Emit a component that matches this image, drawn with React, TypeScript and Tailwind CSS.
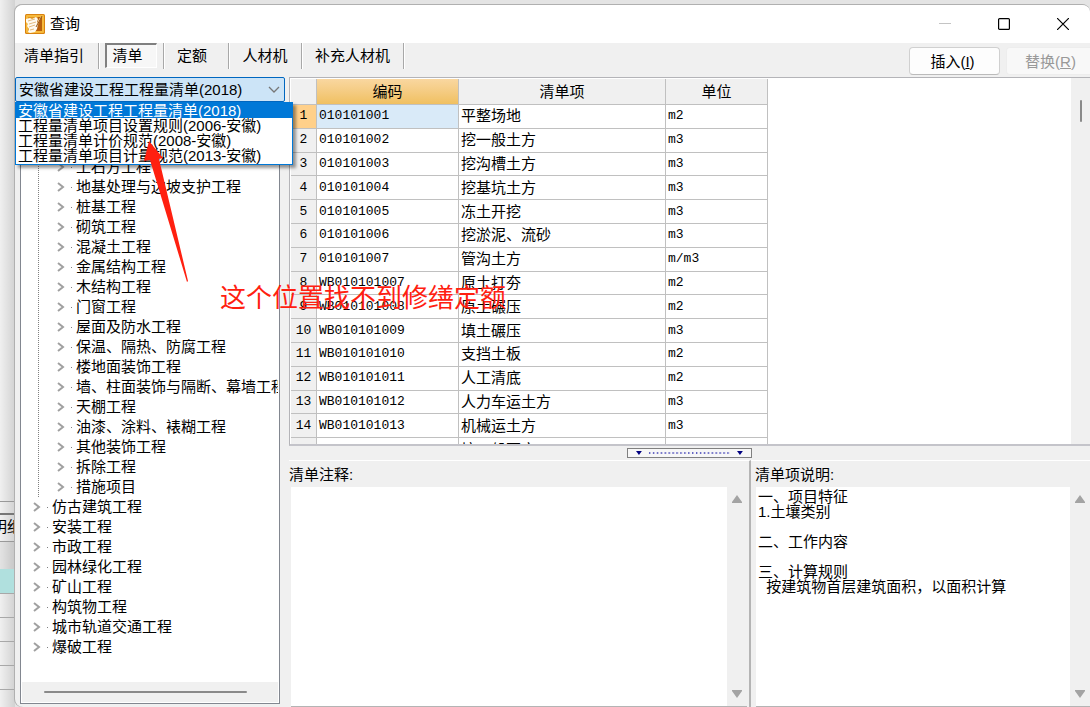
import React, { useState } from "react";

const libraries = [
  "安徽省建设工程工程量清单(2018)",
  "工程量清单项目设置规则(2006-安徽)",
  "工程量清单计价规范(2008-安徽)",
  "工程量清单项目计量规范(2013-安徽)",
];

const subChapters = [
  "土石方工程",
  "地基处理与边坡支护工程",
  "桩基工程",
  "砌筑工程",
  "混凝土工程",
  "金属结构工程",
  "木结构工程",
  "门窗工程",
  "屋面及防水工程",
  "保温、隔热、防腐工程",
  "楼地面装饰工程",
  "墙、柱面装饰与隔断、幕墙工程",
  "天棚工程",
  "油漆、涂料、裱糊工程",
  "其他装饰工程",
  "拆除工程",
  "措施项目",
];

const chapters = [
  "仿古建筑工程",
  "安装工程",
  "市政工程",
  "园林绿化工程",
  "矿山工程",
  "构筑物工程",
  "城市轨道交通工程",
  "爆破工程",
];

const items = [
  { code: "010101001", name: "平整场地", unit: "m2" },
  { code: "010101002", name: "挖一般土方", unit: "m3" },
  { code: "010101003", name: "挖沟槽土方", unit: "m3" },
  { code: "010101004", name: "挖基坑土方", unit: "m3" },
  { code: "010101005", name: "冻土开挖", unit: "m3" },
  { code: "010101006", name: "挖淤泥、流砂", unit: "m3" },
  { code: "010101007", name: "管沟土方", unit: "m/m3" },
  { code: "WB010101007", name: "原土打夯", unit: "m2" },
  { code: "WB010101008", name: "原土碾压", unit: "m2" },
  { code: "WB010101009", name: "填土碾压", unit: "m3" },
  { code: "WB010101010", name: "支挡土板", unit: "m2" },
  { code: "WB010101011", name: "人工清底", unit: "m2" },
  { code: "WB010101012", name: "人力车运土方", unit: "m3" },
  { code: "WB010101013", name: "机械运土方", unit: "m3" },
];

const description = `一、项目特征
1.土壤类别

二、工作内容

三、计算规则
  按建筑物首层建筑面积，以面积计算`;

const AppIcon = () => (
  <svg viewBox="0 0 20 20" className="h-5 w-5">
    <rect width="20" height="20" rx="1.5" fill="#d9820f" />
    <rect x="1" y="1" width="18" height="18" rx="1" fill="#f6b93c" />
    <path d="M3 3h14v14H3z" fill="#e0951f" />
    <path d="M13 3h4v14H8z" fill="#b9600d" />
    <path d="M1 5l4-1 2 1 4-2 2 2-1 3 1 2-1 5-2 3-5 1-2-1 1-3-2-3 1-2-2-2z" fill="#fffaf0" />
    <path d="M3 7l7-2M4 10l7-2M4 13l6-2M5 16l4-1" stroke="#dfb272" strokeWidth="0.9" />
    <path d="M17 2c-3 2-5 6-6 11l2-2c1-4 3-6 4-9z" fill="#fbe0a0" />
    <path d="M17 2l-6 11" stroke="#7a3606" strokeWidth="0.8" />
  </svg>
);

const Chevron = () => (
  <svg viewBox="0 0 8 10" className="h-[10px] w-2" fill="none" stroke="#a0a0a0" strokeWidth="2">
    <path d="M1 1l5 4-5 4" />
  </svg>
);

const TreeItem = ({ label }: { label: string }) => (
  <li className="flex h-5 items-center whitespace-nowrap">
    <button type="button" aria-label={`展开 ${label}`} className="w-[14px] shrink-0">
      <Chevron />
    </button>
    <span className="mr-1 h-px w-px shrink-0 bg-[#808080]" />
    <span>{label}</span>
  </li>
);

const ScrollColumn = () => (
  <div className="flex w-5 shrink-0 flex-col items-center justify-between bg-[#f0f0f0] py-2">
    <svg viewBox="0 0 10 8" className="h-2 w-[10px]" fill="#a3a3a3">
      <path d="M5 0l5 7v1H0V7z" />
    </svg>
    <svg viewBox="0 0 10 8" className="h-2 w-[10px]" fill="#a3a3a3">
      <path d="M5 8l5-7V0H0v1z" />
    </svg>
  </div>
);

const Backdrop = () => (
  <div className="flex w-[15px] shrink-0 flex-col overflow-hidden bg-linear-to-r from-[#f0f0f0] to-[#d2d2d2]">
    <div className="flex-1" />
    <div className="h-3 border-t border-[#999]" />
    <div className="h-7 overflow-hidden border-t-2 border-[#777] pt-[2px] whitespace-nowrap">
      <div className="-ml-2">明细</div>
    </div>
    <div className="h-7 border-t border-[#999] bg-black/5" />
    <div className="h-6 bg-[#b0e0de]" />
    <div className="h-6 border-t border-[#a8a8a8]" />
    <div className="h-6 border-t border-[#a8a8a8]" />
    <div className="h-6 border-t border-[#a8a8a8]" />
    <div className="h-6 border-t border-[#a8a8a8]" />
    <div className="h-[18px] border-t border-[#a8a8a8]" />
  </div>
);

const TitleBar = () => (
  <header className="flex h-[38px] shrink-0 items-center bg-white pr-[21px] pl-[10px]">
    <AppIcon />
    <h1 className="ml-[5px] flex-1">查询</h1>
    <div className="flex gap-[47px]">
      <button type="button" aria-label="最小化" className="h-3 w-3">
        <svg viewBox="0 0 12 12" stroke="#c4c4c4">
          <path d="M0 5.5h12" />
        </svg>
      </button>
      <button type="button" aria-label="最大化" className="h-3 w-3">
        <svg viewBox="0 0 12 12" fill="none" stroke="#000" strokeWidth="1.2">
          <rect x="0.6" y="0.6" width="10.8" height="10.8" rx="1" />
        </svg>
      </button>
      <button type="button" aria-label="关闭" className="h-3 w-3">
        <svg viewBox="0 0 12 12" stroke="#000" strokeWidth="1.2">
          <path d="M0 0l12 12M12 0L0 12" />
        </svg>
      </button>
    </div>
  </header>
);

const Toolbar = () => (
  <div className="flex h-[34px] shrink-0 justify-between">
    <nav className="flex h-[26px] [&>*]:border-r [&>*]:border-[#a8a8a8] [&>*]:shadow-[1px_0_0_#fff]">
      <button type="button" className="w-[84px] pr-[5px]">
        清单指引
      </button>
      <div className="px-[6px]">
        <button
          type="button"
          className="h-[25px] w-[52px] border border-t-2 border-l-2 border-white border-t-[#808080] border-l-[#808080] bg-[#f7f7f7] pr-2"
        >
          清单
        </button>
      </div>
      <button type="button" className="w-[65px] pr-2">
        定额
      </button>
      <button type="button" className="w-[73px]">
        人材机
      </button>
      <button type="button" className="w-[102px]">
        补充人材机
      </button>
    </nav>
    <div className="flex gap-[6px] pt-1">
      <button
        type="button"
        className="h-7 w-[91px] rounded border border-[#d0d0d0] border-b-[#bbb] bg-[#fdfdfd] pr-1 pt-[2px]"
      >
        插入(<u>I</u>)
      </button>
      <button
        type="button"
        disabled
        className="h-7 w-[84px] rounded-l border border-r-0 border-[#ededed] bg-[#f8f8f8] pt-[2px] pl-1 text-[#999]"
      >
        替换(<u>R</u>)
      </button>
    </div>
  </div>
);

const LibrarySelect = () => {
  const [library, setLibrary] = useState(libraries[0]);

  return (
    <div className="relative z-10 h-6 shrink-0">
      <select
        aria-label="清单库"
        value={library}
        onChange={(e) => setLibrary(e.target.value)}
        className="block h-[25px] w-[270px] appearance-none rounded-[2px] border border-[#0067c0] bg-[#cce4f7] pl-[3px]"
      >
        {libraries.map((name) => (
          <option key={name}>{name}</option>
        ))}
      </select>
      <svg
        viewBox="0 0 12 8"
        className="pointer-events-none absolute top-[9px] left-[253px] h-2 w-3"
        fill="none"
        stroke="#777"
        strokeWidth="1.3"
      >
        <path d="M1 1l5 5 5-5" />
      </svg>
      <ul
        role="listbox"
        className="absolute top-[25px] left-0 w-[278px] border border-[#0078d7] bg-white pb-px leading-[15px] whitespace-nowrap shadow-[3px_3px_3px_rgba(0,0,0,0.4)]"
      >
        {libraries.map((name) => (
          <li
            key={name}
            role="option"
            aria-selected={name === library}
            onClick={() => setLibrary(name)}
            className="pl-[2px] aria-selected:bg-[#0078d7] aria-selected:text-white"
          >
            {name}
          </li>
        ))}
      </ul>
    </div>
  );
};

const Tree = () => (
  <div className="mb-[3px] ml-[5px] flex min-h-0 w-[260px] flex-1 flex-col border border-[#828790] bg-white px-px pb-px">
    <div className="min-h-0 flex-1 overflow-hidden pt-[55px]">
      <ul className="ml-4 border-l border-dotted border-[#808080] pl-[18px]">
        {subChapters.map((name) => (
          <TreeItem key={name} label={name} />
        ))}
      </ul>
      <ul className="pl-[11px]">
        {chapters.map((name) => (
          <TreeItem key={name} label={name} />
        ))}
      </ul>
    </div>
    <div className="flex h-5 shrink-0 items-center bg-[#f0f0f0] pr-[31px] pl-[22px]">
      <div className="h-[2px] flex-1 rounded bg-[#8a8a8a]" />
    </div>
  </div>
);

const ItemGrid = () => (
  <div className="flex h-[369px] shrink-0 border border-r-0 border-b-2 border-[#b4b4b8] border-b-[#c4c4ca] bg-white">
    <div className="flex-1 overflow-hidden pt-px pl-px">
      <table className="h-[383px] w-[477px] table-fixed border-separate border-spacing-0 [&_td]:border-r [&_td]:border-b [&_td]:border-[#c0c0c0] [&_td]:p-0 [&_th]:border-r [&_th]:border-b [&_th]:border-[#c0c0c0] [&_th]:p-0 [&_th]:font-normal">
        <thead className="bg-[#f0f0f0]">
          <tr className="h-[26px]">
            <th className="w-[26px]" />
            <th className="w-[142px] bg-linear-to-b from-[#f9d7a0] to-[#f0c060]">编码</th>
            <th className="w-[207px]">清单项</th>
            <th className="w-[102px]">单位</th>
          </tr>
        </thead>
        <tbody className="leading-5">
          {items.map((item, i) => (
            <tr key={item.code} className="group">
              <th className="bg-[#f0f0f0] font-['Liberation_Mono',monospace] text-[13px] group-first:bg-[#ffd08a]">
                {i + 1}
              </th>
              <td className="font-['Liberation_Mono',monospace] text-[13px] group-first:bg-[#d9eaf8]">
                <span className="pl-[2px]">{item.code}</span>
              </td>
              <td>
                <span className="pl-[2px]">{item.name}</span>
              </td>
              <td className="font-['Liberation_Mono',monospace] text-[13px]">
                <span className="pl-[2px]">{item.unit}</span>
              </td>
            </tr>
          ))}
          <tr>
            <th className="bg-[#f0f0f0]" />
            <td />
            <td>
              <span className="pl-[2px]">挖一般石方</span>
            </td>
            <td />
          </tr>
        </tbody>
      </table>
    </div>
    <div className="flex w-[19px] shrink-0 justify-center bg-[#f0f0f0] pt-[22px]">
      <div className="h-[22px] w-[2px] rounded bg-[#8a8a8a]" />
    </div>
  </div>
);

const Splitter = () => (
  <div className="flex h-[14px] shrink-0 items-center justify-center">
    <button
      type="button"
      aria-label="折叠面板"
      className="flex h-[10px] w-[125px] items-center gap-[6px] border border-[#808080] bg-[#f7f7f7] px-2"
    >
      <svg viewBox="0 0 6 4" className="h-1 w-[6px]" fill="#000080">
        <path d="M0 0h6L3 4z" />
      </svg>
      <svg viewBox="0 0 85 2" className="h-[2px] w-[85px]" stroke="#0000a0">
        <path d="M1 1h84" strokeDasharray="1 3" />
        <path d="M1 1h84" strokeDasharray="2 2" strokeOpacity="0.5" />
      </svg>
      <svg viewBox="0 0 6 4" className="h-1 w-[6px]" fill="#000080">
        <path d="M0 0h6L3 4z" />
      </svg>
    </button>
  </div>
);

const Notes = () => (
  <div className="flex min-h-0 flex-1">
    <section className="flex w-[462px] shrink-0 flex-col border-t border-r-2 border-t-white border-r-[#b4b4b4]">
      <label htmlFor="note" className="h-[26px] shrink-0 pt-1">
        清单注释:
      </label>
      <div className="mx-[2px] flex min-h-0 flex-1 border-b border-[#b4b4b4] bg-white">
        <textarea id="note" readOnly className="min-w-0 flex-1 resize-none outline-none" />
        <ScrollColumn />
      </div>
    </section>
    <section className="flex min-w-0 flex-1 flex-col border-t border-white pl-1">
      <label htmlFor="description" className="h-[26px] shrink-0 pt-1">
        清单项说明:
      </label>
      <div className="ml-px flex min-h-0 flex-1 border-b border-[#b4b4b4] bg-white">
        <textarea
          id="description"
          readOnly
          value={description}
          className="min-w-0 flex-1 resize-none overflow-hidden pt-[2px] pl-[2px] leading-[15px] outline-none"
        />
        <ScrollColumn />
      </div>
    </section>
  </div>
);

const Annotation = () => (
  <>
    <svg viewBox="0 0 50 144" className="pointer-events-none absolute top-[140px] left-[140px] z-20 h-36 w-[50px]">
      <path d="M9 1L4 21l6-1 37 122 1-1L19 19l4-1z" fill="#ff2010" />
    </svg>
    <p className="pointer-events-none absolute top-[279px] left-[220px] z-20 text-[26px] leading-[38px] whitespace-nowrap text-[#ff2010]">
      这个位置找不到修缮定额
    </p>
  </>
);

const App = () => {
  return (
    <div className="relative flex h-screen min-h-[600px] overflow-hidden bg-[#e4e4e4] font-['Liberation_Sans','Noto_Sans_CJK_SC',sans-serif] text-[15px] leading-5 text-black">
      <Backdrop />
      <main className="mt-1 flex min-w-0 flex-1 flex-col overflow-hidden rounded-t-lg rounded-bl-lg border-t border-[#b0b0b0] bg-[#f0f0f0] shadow-[-1px_0_0_#b0b0b0]">
        <TitleBar />
        <Toolbar />
        <div className="flex min-h-0 flex-1">
          <aside className="flex w-[274px] shrink-0 flex-col">
            <LibrarySelect />
            <Tree />
          </aside>
          <div className="flex min-w-0 flex-1 flex-col">
            <ItemGrid />
            <Splitter />
            <Notes />
          </div>
        </div>
      </main>
      <Annotation />
    </div>
  );
};

export default App;
